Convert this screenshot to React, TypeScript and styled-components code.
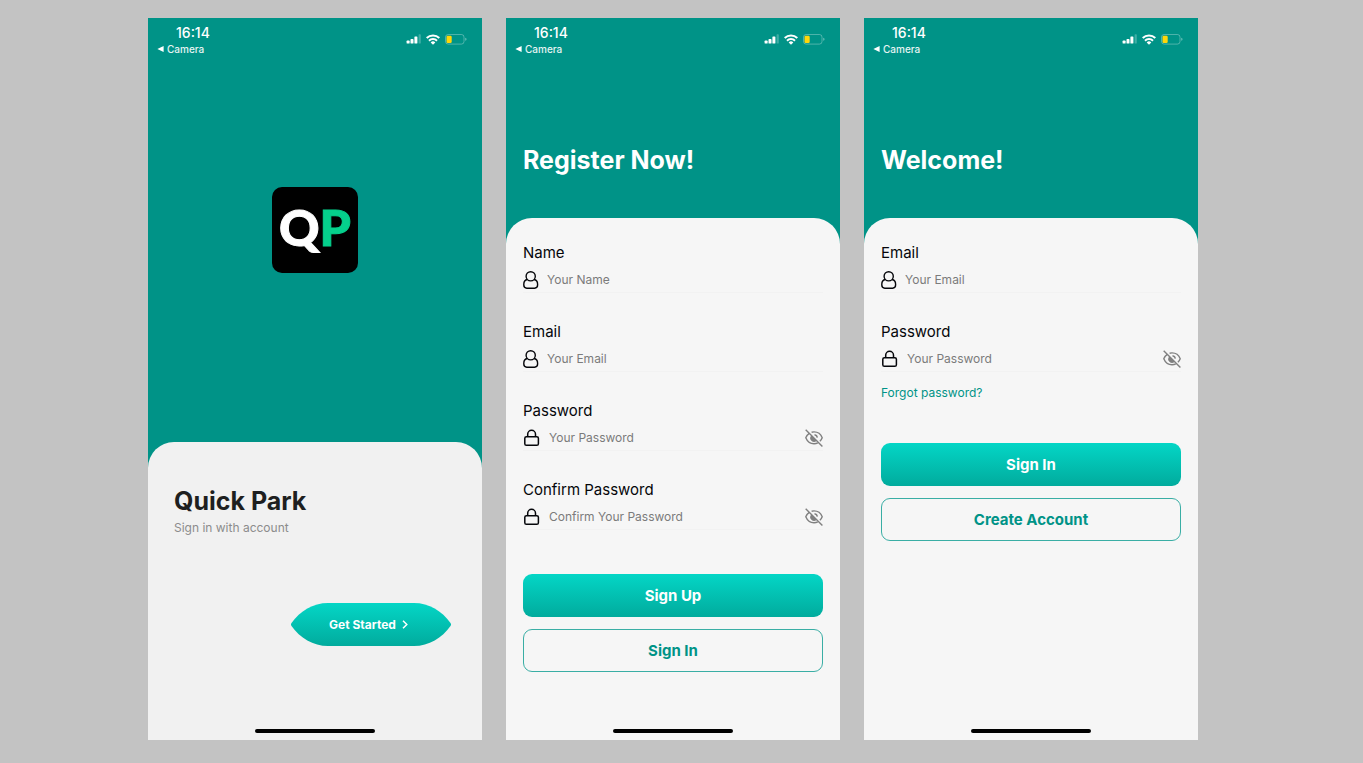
import React, { useId } from "react";
import styled, { createGlobalStyle } from "styled-components";

const GlobalStyle = createGlobalStyle`
  *, *::before, *::after { box-sizing: border-box; }
  body {
    margin: 0;
    background: #c3c3c3;
    font-family: Inter, "Liberation Sans", sans-serif;
  }
  h1, p { margin: 0; }
  button, input { font-family: inherit; }
`;

const teal = "#009387";

const Gallery = styled.main`
  display: grid;
  grid-template-columns: repeat(3, minmax(0, 1fr));
  gap: 24px;
  min-height: 100vh;
  padding: 18px 165px 23px 148px;

  @media (max-width: 1100px) {
    grid-template-columns: repeat(auto-fit, minmax(300px, 1fr));
    padding: 18px 24px;
  }
`;

const Phone = styled.section`
  display: flex;
  flex-direction: column;
  background: ${teal};
  color: #fff;
`;

const StatusBar = styled.div`
  display: flex;
  justify-content: space-between;
  height: 44px;
  padding: 7px 15px 0 9px;
`;

const Clock = styled.p`
  padding-left: 19px;
  font-size: 14px;
  font-weight: 500;
  line-height: 16px;
`;

const BackLink = styled.a`
  display: flex;
  align-items: center;
  gap: 3px;
  color: #e6f4f3;
  font-size: 10px;
  font-weight: 500;
  line-height: 16px;
  text-decoration: none;
`;

const Indicators = styled.div`
  display: flex;
  align-items: center;
  gap: 5px;
  height: 28px;
`;

const LogoArea = styled.div`
  display: flex;
  flex: 1;
  justify-content: center;
  padding-top: 125px;
`;

const Logo = styled.div`
  width: 86px;
  height: 86px;
  border-radius: 10px;
  background: #000;
  color: #fff;
  font-family: Lato, sans-serif;
  font-size: 50px;
  font-weight: 900;
  line-height: 80px;
  text-align: center;
  -webkit-text-stroke: 1px currentColor;
`;

const LogoAccent = styled.span`
  color: #05d08c;
`;

const Banner = styled.header`
  display: flex;
  align-items: flex-end;
  height: 156px;
  padding: 0 17px 42px;
`;

const BannerTitle = styled.h1`
  font-size: 25px;
  font-weight: 700;
  line-height: 32px;
`;

const Sheet = styled.div<{ $intro?: boolean }>`
  display: flex;
  flex: ${(p) => (p.$intro ? "none" : "1")};
  flex-direction: column;
  height: ${(p) => (p.$intro ? "298px" : "auto")};
  padding: ${(p) => (p.$intro ? "43px 26px 7px" : "25px 17px 7px")};
  border-radius: 26px 26px 0 0;
  background: ${(p) => (p.$intro ? "#f1f1f1" : "#f6f6f6")};
  color: #05060a;
`;

const AppTitle = styled.h1`
  color: #1e1f20;
  font-size: 25px;
  font-weight: 700;
  line-height: 32px;
`;

const Tagline = styled.p`
  padding-top: 3px;
  color: #8c8c8c;
  font-size: 12px;
  line-height: 16px;
`;

const StartButton = styled.button`
  position: relative;
  isolation: isolate;
  display: flex;
  align-items: center;
  align-self: flex-end;
  justify-content: center;
  gap: 6px;
  width: 160px;
  height: 43px;
  margin: 67px 5px 0 0;
  padding: 0 5px 0 0;
  border: 0;
  background: none;
  color: #fff;
  font-size: 12px;
  font-weight: 700;
`;

const StartShape = styled.svg`
  position: absolute;
  inset: 0;
  z-index: -1;
`;

const HomeBar = styled.div`
  width: 120px;
  height: 4px;
  margin: auto auto 0;
  border-radius: 2px;
  background: #000;
`;

const Form = styled.form`
  display: flex;
  flex-direction: column;
`;

const Field = styled.div`
  height: 79px;
`;

const Label = styled.label`
  display: block;
  font-size: 15px;
  line-height: 20px;
`;

const InputRow = styled.div`
  display: flex;
  align-items: center;
  gap: 8px;
  height: 30px;
  padding-top: 4px;
  border-bottom: 1px solid #f2f2f2;
`;

const TextInput = styled.input`
  flex: 1;
  min-width: 0;
  padding: 0;
  border: 0;
  outline: 0;
  background: none;
  color: #05060a;
  font-size: 12px;
  line-height: 16px;

  &::placeholder {
    color: #7b7b7b;
    opacity: 1;
  }
`;

const IconButton = styled.button`
  display: flex;
  padding: 0;
  border: 0;
  background: none;
  color: #808080;
`;

const ForgotLink = styled.a`
  align-self: flex-start;
  margin-top: -16px;
  color: ${teal};
  font-size: 12px;
  line-height: 16px;
  text-decoration: none;
`;

const Actions = styled.div<{ $gap: number }>`
  display: flex;
  flex-direction: column;
  gap: 12px;
  padding-top: ${(p) => p.$gap}px;
`;

const ActionButton = styled.button<{ $outline?: boolean }>`
  height: 43px;
  padding: 0;
  border: ${(p) => (p.$outline ? `1px solid #3aaea5` : "0")};
  border-radius: 9px;
  background: ${(p) => (p.$outline ? "none" : "linear-gradient(#04d6c6, #01ab9d)")};
  color: ${(p) => (p.$outline ? teal : "#fff")};
  font-size: 15px;
  font-weight: 700;
`;

function Status() {
  return (
    <StatusBar>
      <div>
        <Clock>16:14</Clock>
        <BackLink href="#camera">
          <svg width="7" height="6" viewBox="0 0 7 6" aria-hidden="true">
            <path d="M6.6 0v6L.4 3z" fill="#fff" />
          </svg>
          Camera
        </BackLink>
      </div>
      <Indicators>
        <svg width="15" height="10" viewBox="0 0 15 10" fill="#fff" aria-hidden="true">
          <rect x="0.6" y="6.6" width="3" height="3" rx=".7" />
          <rect x="4.5" y="5" width="3" height="4.6" rx=".7" />
          <rect x="8.4" y="2.4" width="3" height="7.2" rx=".7" />
          <rect x="12.6" y="0.2" width="2.2" height="9.4" rx=".7" opacity=".25" />
        </svg>
        <svg width="14" height="11" viewBox="0 0 14 11" fill="none" stroke="#fff" strokeWidth="2" aria-hidden="true">
          <path d="M.7 4a9 9 0 0 1 12.6 0" />
          <path d="M3 6.7a5.7 5.7 0 0 1 8 0" />
          <path d="M7 10.7 4.7 8.4a3.3 3.3 0 0 1 4.6 0z" fill="#fff" stroke="none" />
        </svg>
        <svg width="22" height="11" viewBox="0 0 22 11" aria-hidden="true">
          <rect x=".5" y=".5" width="18.5" height="9.6" rx="2.6" fill="none" stroke="#fff" opacity=".3" />
          <rect x="1.5" y="1.7" width="5.2" height="7.2" rx="1.2" fill="#ffd60a" />
          <path d="M20.3 3.8v3q1.2-.4 1.2-1.5t-1.2-1.5z" fill="#fff" opacity=".45" />
        </svg>
      </Indicators>
    </StatusBar>
  );
}

function UserIcon() {
  return (
    <svg width="16" height="18" viewBox="0 0 16 18" fill="none" stroke="currentColor" strokeWidth="1.4" aria-hidden="true">
      <ellipse cx="7.7" cy="5.3" rx="4.6" ry="4.6" />
      <path d="M4.4 8.5C1.8 8.9.8 10.8.8 13.3v.8c0 2.1 1 3.1 3 3.1h7.8c2 0 3-1 3-3.1v-.8c0-2.500-1-4.400-3.600-4.800" />
    </svg>
  );
}

function LockIcon() {
  return (
    <svg width="18" height="18" viewBox="0 0 18 18" fill="none" stroke="currentColor" strokeWidth="1.5" aria-hidden="true">
      <rect x="1.8" y="7.7" width="13.6" height="8.6" rx="1.6" />
      <path d="M4.700 7.700V5.200a3.900 3.900 0 0 1 7.800 0v2.500" />
    </svg>
  );
}

function EyeOffIcon() {
  return (
    <svg width="18" height="18" viewBox="0 0 18 18" fill="none" stroke="currentColor" strokeWidth="1.4" aria-hidden="true">
      <path d="M.7.7 17.4 17.4" />
      <path d="M4.300 4.300C2.700 5.300 1.500 6.900.8 8.800c1.500 3.700 4.500 6 8.200 6 1.400 0 2.700-.3 3.800-.9" />
      <path d="M6.600 3.200c.8-.2 1.600-.3 2.400-.3 3.700 0 6.800 2.200 8.200 5.900-.5 1.300-1.300 2.500-2.300 3.500" />
      <path d="M9.500 5.800a3.300 3.300 0 0 1 2.800 2.900" />
      <path d="M6.400 6.400 11.700 11.700A3.700 3.700 0 0 1 6.400 6.400z" fill="currentColor" stroke="none" />
    </svg>
  );
}

type FieldProps = { label: string; hint: string; secret?: boolean };

function FormField({ label, hint, secret }: FieldProps) {
  const id = useId();
  return (
    <Field>
      <Label htmlFor={id}>{label}</Label>
      <InputRow>
        {secret ? <LockIcon /> : <UserIcon />}
        <TextInput id={id} type={secret ? "password" : "text"} placeholder={hint} />
        {secret && (
          <IconButton type="button" aria-label="Show password">
            <EyeOffIcon />
          </IconButton>
        )}
      </InputRow>
    </Field>
  );
}

export default function App() {
  return (
    <>
      <GlobalStyle />
      <Gallery>
        <Phone>
          <Status />
          <LogoArea>
            <Logo>
              Q<LogoAccent>P</LogoAccent>
            </Logo>
          </LogoArea>
          <Sheet $intro>
            <AppTitle>Quick Park</AppTitle>
            <Tagline>Sign in with account</Tagline>
            <StartButton type="button">
              <StartShape width="160" height="43" viewBox="0 0 160 43" aria-hidden="true">
                <defs>
                  <linearGradient id="start-fill" x1="0" y1="0" x2="0" y2="1">
                    <stop offset="0" stopColor="#04d6c6" />
                    <stop offset="1" stopColor="#01ab9d" />
                  </linearGradient>
                </defs>
                <path
                  d="M37 0h86c15 0 28 8 36.500 20q1 1.500 0 3C151 35 138 43 123 43H37C22 43 9 35 .5 23q-1-1.500 0-3C9 8 22 0 37 0z"
                  fill="url(#start-fill)"
                />
              </StartShape>
              Get Started
              <svg width="6" height="9" viewBox="0 0 6 9" fill="none" stroke="#fff" strokeWidth="1.5" aria-hidden="true">
                <path d="M1 .7 4.8 4.5 1 8.300" />
              </svg>
            </StartButton>
            <HomeBar />
          </Sheet>
        </Phone>

        <Phone>
          <Status />
          <Banner>
            <BannerTitle>Register Now!</BannerTitle>
          </Banner>
          <Sheet>
            <Form>
              <FormField label="Name" hint="Your Name" />
              <FormField label="Email" hint="Your Email" />
              <FormField label="Password" hint="Your Password" secret />
              <FormField label="Confirm Password" hint="Confirm Your Password" secret />
              <Actions $gap={15}>
                <ActionButton type="button">Sign Up</ActionButton>
                <ActionButton type="button" $outline>Sign In</ActionButton>
              </Actions>
            </Form>
            <HomeBar />
          </Sheet>
        </Phone>

        <Phone>
          <Status />
          <Banner>
            <BannerTitle>Welcome!</BannerTitle>
          </Banner>
          <Sheet>
            <Form>
              <FormField label="Email" hint="Your Email" />
              <FormField label="Password" hint="Your Password" secret />
              <ForgotLink href="#forgot">Forgot password?</ForgotLink>
              <Actions $gap={42}>
                <ActionButton type="button">Sign In</ActionButton>
                <ActionButton type="button" $outline>Create Account</ActionButton>
              </Actions>
            </Form>
            <HomeBar />
          </Sheet>
        </Phone>
      </Gallery>
    </>
  );
}
